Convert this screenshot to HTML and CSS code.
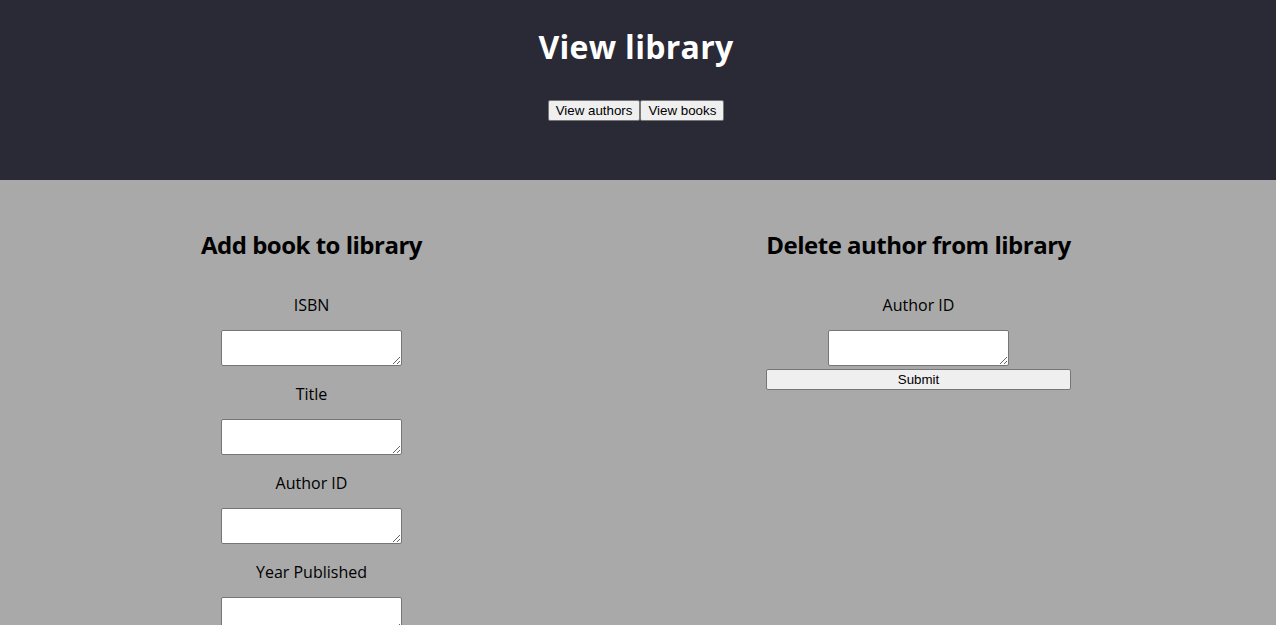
FILE: index.html
```html
<!DOCTYPE html>
<html lang="en">
<head>
<meta charset="utf-8">
<title>View library</title>
<link rel="stylesheet" href="styles.css">
</head>
<body>
<header class="top">
  <h1 class="title">View library</h1>
  <nav class="nav"><button class="btn">View authors</button><button class="btn">View books</button></nav>
</header>
<main class="content">
  <section class="panel">
    <form class="form">
      <h2 class="heading">Add book to library</h2>
      <label class="label first">ISBN</label>
      <textarea class="field"></textarea>
      <label class="label">Title</label>
      <textarea class="field"></textarea>
      <label class="label">Author ID</label>
      <textarea class="field"></textarea>
      <label class="label">Year Published</label>
      <textarea class="field"></textarea>
    </form>
  </section>
  <section class="panel">
    <form class="form">
      <h2 class="heading">Delete author from library</h2>
      <label class="label first">Author ID</label>
      <textarea class="field"></textarea>
      <button type="button" class="btn submit">Submit</button>
    </form>
  </section>
</main>
</body>
</html>
```
FILE: styles.css
```css
html, body {
  margin: 0;
  padding: 0;
}
body {
  font-family: "Open Sans", "Noto Sans", sans-serif;
  background: #a9a9a9;
  color: #000;
  overflow: hidden;
}
.top {
  background: #292a35;
  height: 180px;
  display: flex;
  flex-direction: column;
  align-items: center;
  padding-right: 4px;
}
.title {
  margin: 26px 0 0;
  color: #fff;
  font-size: 32px;
  line-height: 42px;
  font-weight: 700;
  letter-spacing: 0.3px;
}
.nav {
  margin-top: 32px;
  display: flex;
}
.btn {
  font-family: "Liberation Sans", Arial, sans-serif;
  font-size: 13.33px;
  height: 21px;
  padding: 1px 7px;
  background: #efefef;
  border: 1px solid #767676;
  border-radius: 2px;
  color: #000;
}
.content {
  display: grid;
  grid-template-columns: 607px 607px;
  padding-left: 8px;
}
.panel {
  display: flex;
  justify-content: center;
}
.form {
  display: flex;
  flex-direction: column;
  align-items: center;
}
.heading {
  margin: 50px 0 0;
  font-size: 24px;
  line-height: 30px;
  font-weight: 700;
  letter-spacing: -0.5px;
}
.label {
  display: block;
  font-size: 16px;
  line-height: 20px;
  margin: 18px 0 15px;
}
.label.first {
  margin-top: 35px;
}
.field {
  box-sizing: border-box;
  width: 181px;
  height: 36px;
  margin: 0;
  border: 1px solid #767676;
  border-radius: 2px;
  background: #fff;
}
.submit {
  align-self: stretch;
  margin-top: 3px;
}
```
